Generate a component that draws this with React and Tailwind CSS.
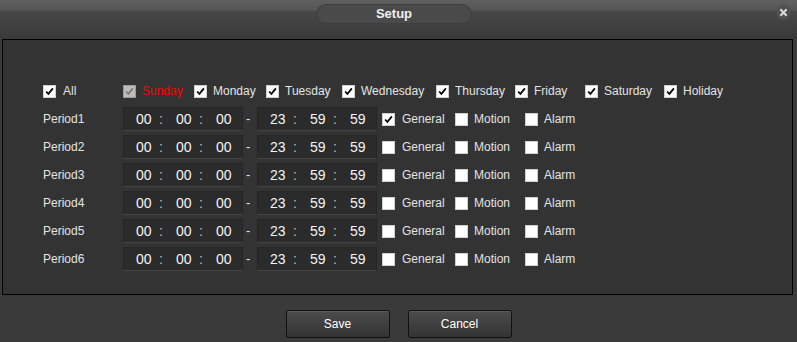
import React from 'react';

const days = ['Sunday', 'Monday', 'Tuesday', 'Wednesday', 'Thursday', 'Friday', 'Saturday', 'Holiday'];
const dayGaps = ['w-[71px]', 'w-[72px]', 'w-[76px]', 'w-[94px]', 'w-[79px]', 'w-[70px]', 'w-[79px]', 'w-[80px]'];

const Check = ({ checked, disabled }) => (
    <span
        className={`flex h-[13px] w-[13px] shrink-0 items-center justify-center border ${
            disabled ? 'border-[#9a9a9a] bg-[#bdbdbd]' : 'border-[#d0d0d0] bg-white'
        }`}
    >
        {checked && (
            <svg viewBox="0 0 13 13" className="h-[13px] w-[13px]">
                <path
                    d="M2.5 6.5 L5.2 9.3 L10.5 2.8"
                    fill="none"
                    stroke={disabled ? '#7a7a7a' : '#000'}
                    strokeWidth="2"
                />
            </svg>
        )}
    </span>
);

const TimeBox = ({ values }) => (
    <div className="flex h-[24px] w-[120px] items-center border border-[#252525] border-b-[#454545] bg-[#2b2b2b] text-[14px] text-[#f4f4f4]">
        <span className="w-[35px] pl-[12px]">{values[0]}</span>
        <span className="w-[2px] text-[#bbb]">:</span>
        <span className="w-[38px] pl-[15px]">{values[1]}</span>
        <span className="w-[2px] text-[#bbb]">:</span>
        <span className="pl-[15px]">{values[2]}</span>
    </div>
);

const App = () => {
    return (
        <div
            className="flex h-[342px] w-[797px] flex-col bg-[#3a3a3a] text-[12px] text-[#e4e4e4]"
            style={{ fontFamily: '"Liberation Sans", Arial, sans-serif' }}
        >
            {/* Title bar */}
            <div className="relative flex h-[39px] shrink-0 justify-center pr-[9px] bg-[linear-gradient(to_bottom,#5f5f5f_0px,#575757_10px,#474747_11px,#3a3a3a_38px)]">
                <div className="mt-[4px] flex h-[20px] w-[156px] items-center justify-center rounded-full border border-[#3e3e3e] bg-[#4a4a4a] text-[13px] font-bold text-[#f0f0f0]">
                    Setup
                </div>
                <div className="absolute right-[6px] top-[5px] flex h-[15px] w-[15px] items-center justify-center rounded-full bg-[#4f4f4f]">
                    <svg viewBox="0 0 10 10" className="h-[9px] w-[9px]">
                        <path d="M1.5 1.5 L8.5 8.5 M8.5 1.5 L1.5 8.5" stroke="#d8d8d8" strokeWidth="2.4" />
                    </svg>
                </div>
            </div>

            {/* Panel */}
            <div className="ml-[2px] h-[256px] w-[791px] shrink-0 border border-black bg-[#333333] pl-[40px] pt-[37px]">
                <div className="flex h-[28px] items-center">
                    <div className="flex w-[80px] items-center gap-[7px]">
                        <Check checked />
                        <span>All</span>
                    </div>
                    {days.map((d, i) => (
                        <div key={d} className={`flex items-center gap-[6px] ${dayGaps[i]}`}>
                            <Check checked disabled={i === 0} />
                            <span className={i === 0 ? 'text-[#ff0000]' : ''}>{d}</span>
                        </div>
                    ))}
                </div>
                {[1, 2, 3, 4, 5, 6].map((n) => (
                    <div key={n} className="flex h-[28px] items-center">
                        <div className="w-[80px]">Period{n}</div>
                        <TimeBox values={['00', '00', '00']} />
                        <span className="w-[14px] pl-[3px] text-[13px]">-</span>
                        <TimeBox values={['23', '59', '59']} />
                        <div className="ml-[5px] flex w-[73px] items-center gap-[7px]">
                            <Check checked={n === 1} />
                            <span>General</span>
                        </div>
                        <div className="flex w-[70px] items-center gap-[6px]">
                            <Check />
                            <span>Motion</span>
                        </div>
                        <div className="flex items-center gap-[6px]">
                            <Check />
                            <span>Alarm</span>
                        </div>
                    </div>
                ))}
            </div>

            {/* Footer buttons */}
            <div className="flex justify-center gap-[18px] pt-[15px]">
                <button className="h-[28px] w-[104px] rounded-[2px] border border-[#111] bg-[linear-gradient(to_bottom,#4c4c4c,#333333)] text-[12px] text-white shadow-[inset_0_1px_0_#5a5a5a]">
                    Save
                </button>
                <button className="h-[28px] w-[104px] rounded-[2px] border border-[#111] bg-[linear-gradient(to_bottom,#4c4c4c,#333333)] text-[12px] text-white shadow-[inset_0_1px_0_#5a5a5a]">
                    Cancel
                </button>
            </div>
        </div>
    );
};

export default App;
